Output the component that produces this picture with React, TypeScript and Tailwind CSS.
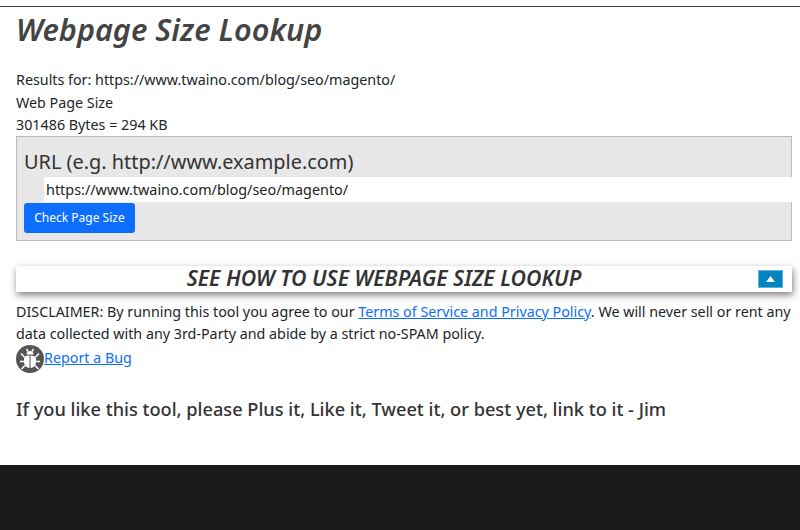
export default function App() {
  return (
    <div className="h-[530px] w-[800px] overflow-hidden bg-white flex flex-col text-[#212529] font-['Noto_Sans','Open_Sans',sans-serif] text-[14.3px] leading-[22.5px]">
      <div className="mt-[6px] h-[1px] bg-[#444]" />
      <main className="flex-1 pl-4">
        <h1 className="-mt-[1px] h-[46px] text-[30.7px] leading-[46px] italic font-semibold text-[#444]">Webpage Size Lookup</h1>
        <div className="mt-[17px]">
          <p>Results for: https://www.twaino.com/blog/seo/magento/</p>
          <p>Web Page Size</p>
          <p>301486 Bytes = 294 KB</p>
        </div>
        <form className="h-[105px] w-[776px] border border-[#bbb] bg-[conic-gradient(#e4e4e4_25%,#ebebeb_0_50%,#e4e4e4_0_75%,#ebebeb_0)] bg-[length:2px_2px] pl-[7px] pt-[11px] -mt-[1px]">
          <label className="block text-[19.9px] leading-[28px] mb-[1px] text-[#333]">URL (e.g. http://www.example.com)</label>
          <div className="ml-[20px] h-[25px] w-[760px] bg-white pl-[2px] leading-[25px] text-[14.4px] text-[#222]">https://www.twaino.com/blog/seo/magento/</div>
          <button type="button" className="mt-[1px] block h-[30px] w-[111px] rounded-[3px] bg-[#0d6efd] pt-[2px] text-center text-[12px] text-white">Check Page Size</button>
        </form>
        <div className="mt-[25px] flex h-[26px] w-[776px] items-center bg-white pr-[9px] shadow-[1px_3px_7px_rgba(0,0,0,0.5)]">
          <div className="flex-1 pr-[6px] text-center text-[21.3px] italic font-semibold text-[#333]">SEE HOW TO USE WEBPAGE SIZE LOOKUP</div>
          <button type="button" aria-label="toggle" className="flex h-[18px] w-[25px] items-center justify-center border border-[#5fb4dc] bg-[#0284c0]">
            <svg width="9" height="6" viewBox="0 0 9 6"><path d="M4.5 0L9 6H0z" fill="#fff" /></svg>
          </button>
        </div>
        <p className="mt-[9px] w-[780px]">DISCLAIMER: By running this tool you agree to our <a href="#" className="text-[#0d6efd] underline">Terms of Service and Privacy Policy</a>. We will never sell or rent any data collected with any 3rd-Party and abide by a strict no-SPAM policy.</p>
        <div className="flex h-[28px] items-center -mt-[1px]">
          <svg width="28" height="28" viewBox="0 0 28 28" className="shrink-0">
            <circle cx="14" cy="14" r="14" fill="#555" />
            <path d="M8 13.5C8 11.5 10 10.5 13.5 10.5V23C10 22.7 8 20 8 16.5zM20 13.5C20 11.5 18 10.5 14.5 10.5V23C18 22.7 20 20 20 16.5z" fill="#fff" />
            <path d="M10.5 9.5C10.5 7.5 12 6 14 6s3.5 1.5 3.5 3.5z" fill="#fff" />
            <path d="M8.5 12L5 8.5M19.5 12L23 8.5M8 16.5H4M20 16.5h4M9 20.5L5.5 24M19 20.5l3.5 3.5M12 6.5L10.5 4M16 6.5L17.5 4" stroke="#fff" strokeWidth="1.5" fill="none" />
          </svg>
          <a href="#" className="text-[#0d6efd] underline">Report a Bug</a>
        </div>
        <p className="mt-[23px] text-[18.2px] leading-[26px] font-medium text-[#333]">If you like this tool, please Plus it, Like it, Tweet it, or best yet, link to it - Jim</p>
      </main>
      <footer className="h-[65px] shrink-0 bg-[#1a1a1a]" />
    </div>
  );
}
